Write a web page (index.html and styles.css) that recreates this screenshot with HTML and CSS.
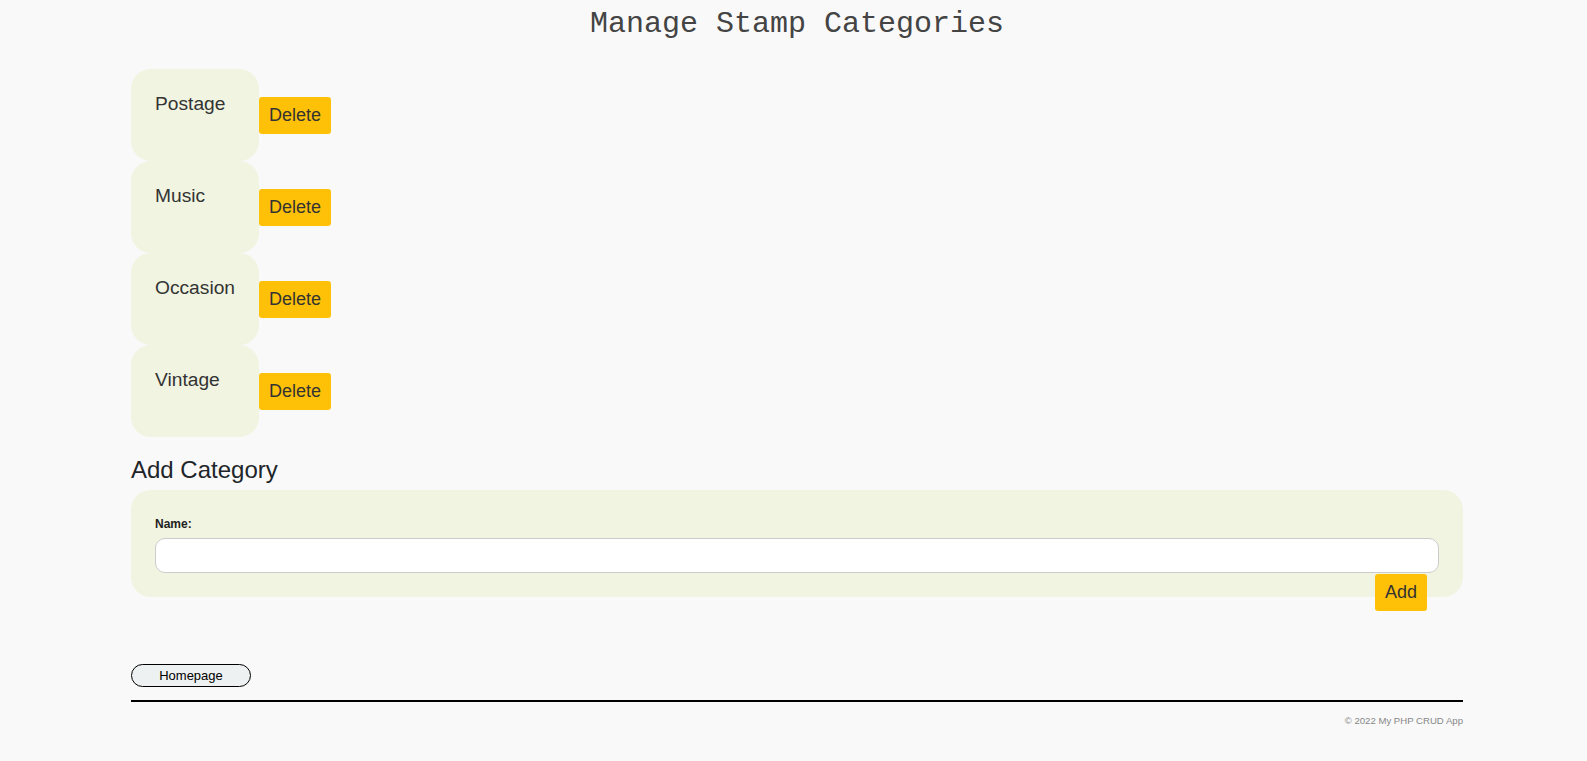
FILE: index.html
```html
<!DOCTYPE html>
<html lang="en">
<head>
<meta charset="utf-8">
<title>Manage Stamp Categories</title>
<link rel="stylesheet" href="styles.css">
</head>
<body>
<div class="page">
  <h1 class="title">Manage Stamp Categories</h1>
  <ul class="cat-list">
    <li class="cat-row"><div class="cat-card">Postage</div><button class="btn" type="button">Delete</button></li>
    <li class="cat-row"><div class="cat-card">Music</div><button class="btn" type="button">Delete</button></li>
    <li class="cat-row"><div class="cat-card">Occasion</div><button class="btn" type="button">Delete</button></li>
    <li class="cat-row"><div class="cat-card">Vintage</div><button class="btn" type="button">Delete</button></li>
  </ul>
  <h2 class="section-title">Add Category</h2>
  <form class="add-form">
    <label class="field-label" for="name">Name:</label>
    <input class="field-input" id="name" type="text">
    <button class="btn btn-add" type="button">Add</button>
  </form>
  <div class="home-wrap"><a class="home-btn" href="#">Homepage</a></div>
  <footer class="footer">
    <p class="copyright">© 2022 My PHP CRUD App</p>
  </footer>
</div>
</body>
</html>
```

FILE: styles.css
```css
html, body {
  margin: 0;
  padding: 0;
  background: #f9f9f9;
}

body {
  font-family: "Liberation Sans", Arial, sans-serif;
  color: #333;
}

.page {
  width: 1332px;
  margin-left: 131px;
}

.title {
  margin: 0;
  padding-top: 7px;
  font-family: "Liberation Mono", "Courier New", monospace;
  font-weight: normal;
  font-size: 30px;
  line-height: 34px;
  text-align: center;
  color: #444;
}

.cat-list {
  list-style: none;
  margin: 28px 0 0;
  padding: 0;
}

.cat-row {
  display: flex;
  align-items: center;
}

.cat-card {
  box-sizing: border-box;
  width: 128px;
  height: 92px;
  padding: 24px 0 0 24px;
  background: #f1f4e1;
  border-radius: 20px;
  font-size: 19.2px;
  line-height: 22px;
  color: #333;
}

.btn {
  border: none;
  border-radius: 3px;
  background: #ffc107;
  color: #333;
  font-family: "Liberation Sans", Arial, sans-serif;
  font-size: 18px;
  line-height: 21px;
  padding: 8px 10px;
  cursor: pointer;
}

.section-title {
  margin: 19px 0 6px;
  font-size: 24px;
  font-weight: normal;
  line-height: 28px;
  color: #212529;
}

.add-form {
  padding: 24px;
  background: #f1f4e1;
  border-radius: 20px;
}

.field-label {
  display: block;
  font-size: 12px;
  font-weight: bold;
  line-height: 20px;
  margin-bottom: 4px;
  color: #222;
}

.field-input {
  display: block;
  box-sizing: border-box;
  width: 100%;
  height: 35px;
  border: 1px solid #ccc;
  border-radius: 10px;
  background: #fff;
  padding: 4px 10px;
  font-size: 16px;
}

.btn-add {
  float: right;
  margin: 1px 12px 0 0;
}

.home-wrap {
  margin-top: 67px;
  height: 23px;
}

.home-btn {
  display: inline-block;
  box-sizing: border-box;
  width: 120px;
  height: 23px;
  border: 1px solid #000;
  border-radius: 12px;
  background: #edf1f1;
  color: #000;
  font-size: 13px;
  line-height: 21px;
  text-align: center;
  text-decoration: none;
}

.footer {
  margin-top: 13px;
  border-top: 2px solid #000;
}

.copyright {
  margin: 13px 0 0;
  text-align: right;
  font-size: 9.6px;
  line-height: 11px;
  color: #888;
}
```
